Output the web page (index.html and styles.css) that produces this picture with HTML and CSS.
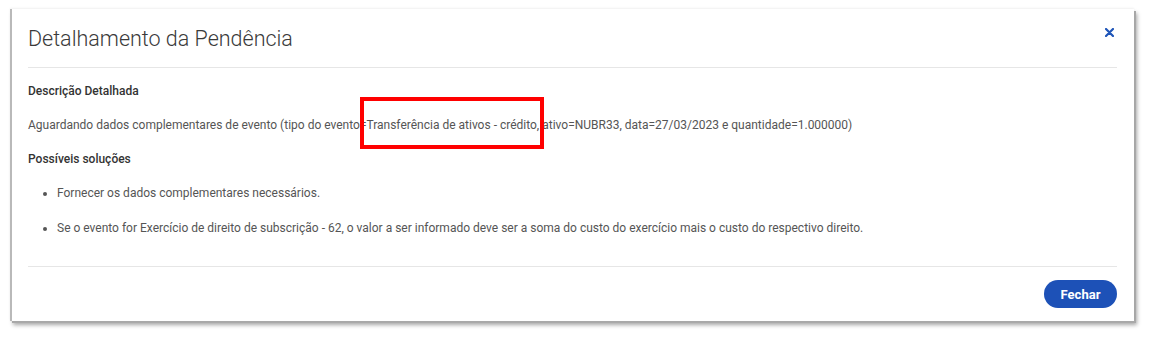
FILE: index.html
```html
<!DOCTYPE html>
<html lang="pt-BR">
<head>
<meta charset="utf-8">
<link rel="stylesheet" href="styles.css">
</head>
<body>
<div class="modal">
  <div class="modal-header">
    <h1 class="title">Detalhamento da Pendência</h1>
    <button class="close" aria-label="Fechar">
      <svg width="9" height="9" viewBox="0 0 9 9"><path d="M1 1 L8 8 M8 1 L1 8" stroke="#1f55b8" stroke-width="2.2" stroke-linecap="round"/></svg>
    </button>
  </div>
  <div class="modal-body">
    <h2 class="label">Descrição Detalhada</h2>
    <p class="text">Aguardando dados complementares de evento (tipo do evento=Transferência de ativos - crédito, ativo=NUBR33, data=27/03/2023 e quantidade=1.000000)</p>
    <h2 class="label">Possíveis soluções</h2>
    <ul class="list">
      <li>Fornecer os dados complementares necessários.</li>
      <li>Se o evento for Exercício de direito de subscrição - 62, o valor a ser informado deve ser a soma do custo do exercício mais o custo do respectivo direito.</li>
    </ul>
  </div>
  <div class="modal-footer">
    <button class="btn">Fechar</button>
  </div>
  <div class="highlight"></div>
</div>
</body>
</html>
```
FILE: styles.css
```css
html, body {
  margin: 0;
  padding: 0;
  background: #ffffff;
}
body {
  padding: 9px 0 0 10px;
  min-height: 337px;
  box-sizing: border-box;
  font-family: Roboto, "Liberation Sans", Arial, sans-serif;
}
.modal {
  position: relative;
  width: 1124px;
  height: 312px;
  background: #fff;
  border-left: 2px solid #b9b9b9;
  box-shadow: 0 -1px 2px rgba(0,0,0,0.06), 2px 2px 0 #a9a9a9, 3px 4px 4px rgba(0,0,0,0.35);
  box-sizing: border-box;
  padding: 0 17px 0 16px;
}
.modal-header {
  display: flex;
  align-items: flex-start;
  justify-content: space-between;
  height: 58px;
  border-bottom: 1px solid #e6e6e6;
}
.title {
  margin: 0;
  padding-top: 17px;
  font-size: 21.5px;
  font-weight: 300;
  color: #3a3a3a;
}
.close {
  margin: 19px 3px 0 0;
  padding: 0;
  border: 0;
  background: none;
  width: 9px;
  height: 9px;
  display: flex;
}
.modal-body {
  padding: 15px 0 30px;
  border-bottom: 1px solid #e6e6e6;
}
.label {
  margin: 0;
  font-size: 12px;
  font-weight: 500;
  color: #333;
  line-height: 16px;
}
.text {
  margin: 18px 0 18px;
  font-size: 12px;
  color: #555;
  line-height: 16px;
}
.list {
  margin: 18px 0 0;
  padding-left: 29px;
  font-size: 12px;
  color: #555;
  line-height: 16px;
}
.list li {
  margin-bottom: 19px;
}
.list li:last-child {
  margin-bottom: 0;
}
.modal-footer {
  display: flex;
  justify-content: flex-end;
  padding-top: 13px;
}
.btn {
  width: 73px;
  height: 28px;
  border: 0;
  border-radius: 14px;
  background: #1d51b7;
  color: #fff;
  font-family: Roboto, "Liberation Sans", Arial, sans-serif;
  font-weight: 700;
  font-size: 13px;
  padding: 0;
}
.highlight {
  position: absolute;
  left: 348px;
  top: 88px;
  width: 176px;
  height: 44px;
  border: 4px solid #ff0000;
}
```
